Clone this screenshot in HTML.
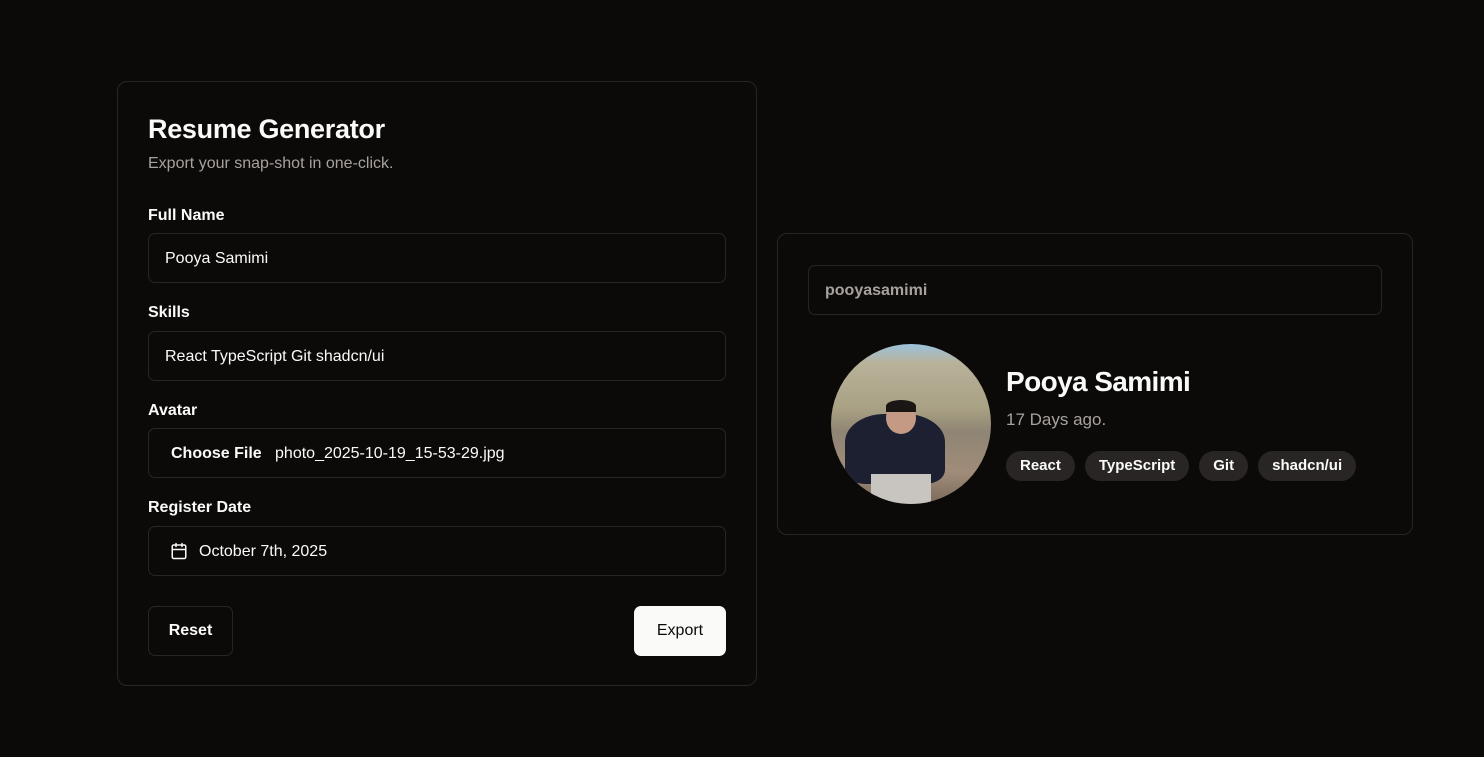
<!DOCTYPE html>
<html><head><style>
*{box-sizing:border-box;margin:0;padding:0}
body{width:1484px;height:757px;background:#0c0a09;font-family:"Liberation Sans",sans-serif;color:#fafaf9;position:relative;overflow:hidden}
.card{position:absolute;border:1px solid #292524;border-radius:10px;background:#0c0a09}
.abs{position:absolute}
.title{font-size:27px;font-weight:bold;letter-spacing:-0.3px}
.sub{font-size:16px;color:#a8a29e}
.lbl{font-size:16px;font-weight:bold}
.inp{position:absolute;left:30px;width:578px;height:50px;border:1px solid #292524;border-radius:7px;font-size:16px;padding-left:16px;line-height:49px;color:#fafaf9}
.btn{position:absolute;height:50px;border-radius:7px;font-size:16px;font-weight:bold;line-height:50px;text-align:center}
.tag{display:inline-block;height:30px;line-height:30px;padding:0 14px;border-radius:15px;background:#292524;font-size:15px;font-weight:bold;margin-right:10px}
</style></head><body>
<div class="card" style="left:117px;top:81px;width:640px;height:605px">
  <div class="abs title" style="left:30px;top:32px">Resume Generator</div>
  <div class="abs sub" style="left:30px;top:73px">Export your snap-shot in one-click.</div>
  <div class="abs lbl" style="left:30px;top:125px">Full Name</div>
  <div class="inp" style="top:151px">Pooya Samimi</div>
  <div class="abs lbl" style="left:30px;top:222px">Skills</div>
  <div class="inp" style="top:249px">React TypeScript Git shadcn/ui</div>
  <div class="abs lbl" style="left:30px;top:320px">Avatar</div>
  <div class="inp" style="top:346px;padding-left:22px"><b>Choose File</b>&nbsp;&nbsp; photo_2025-10-19_15-53-29.jpg</div>
  <div class="abs lbl" style="left:30px;top:417px">Register Date</div>
  <div class="inp" style="top:444px;padding-left:50px">
    <svg style="position:absolute;left:21px;top:15px" width="18" height="18" viewBox="0 0 24 24" fill="none" stroke="#fafaf9" stroke-width="2" stroke-linecap="round"><rect x="3" y="4" width="18" height="18" rx="2"/><path d="M16 2v4M8 2v4M3 10h18"/></svg>
    October 7th, 2025</div>
  <div class="btn" style="left:30px;top:524px;width:85px;border:1px solid #292524;line-height:48px">Reset</div>
  <div class="btn" style="left:516px;top:524px;width:92px;background:#fafaf9;color:#0c0a09;font-weight:normal">Export</div>
</div>
<div class="card" style="left:777px;top:233px;width:636px;height:302px">
  <div class="inp" style="top:31px;width:574px;color:#a8a29e;font-weight:bold">pooyasamimi</div>
  <div class="abs" style="left:53px;top:110px;width:160px;height:160px;border-radius:50%;overflow:hidden;background:linear-gradient(180deg,#9cc3dc 0%,#b8b29a 12%,#a9a184 40%,#8f8575 55%,#a08c78 80%,#7a6a5c 100%)">
    <div class="abs" style="left:14px;top:70px;width:100px;height:70px;background:#1d2030;border-radius:40% 40% 20% 20%"></div>
    <div class="abs" style="left:55px;top:58px;width:30px;height:32px;background:#c49a84;border-radius:50%"></div>
    <div class="abs" style="left:55px;top:56px;width:30px;height:12px;background:#1a1614;border-radius:50% 50% 0 0"></div>
    <div class="abs" style="left:40px;top:130px;width:60px;height:30px;background:#c8c4c0"></div>
  </div>
  <div class="abs" style="left:228px;top:132px;font-size:28px;font-weight:bold;letter-spacing:-0.6px">Pooya Samimi</div>
  <div class="abs sub" style="left:228px;top:176px;font-size:17px">17 Days ago.</div>
  <div class="abs" style="left:228px;top:217px;white-space:nowrap"><span class="tag">React</span><span class="tag">TypeScript</span><span class="tag">Git</span><span class="tag">shadcn/ui</span></div>
</div>
</body></html>
